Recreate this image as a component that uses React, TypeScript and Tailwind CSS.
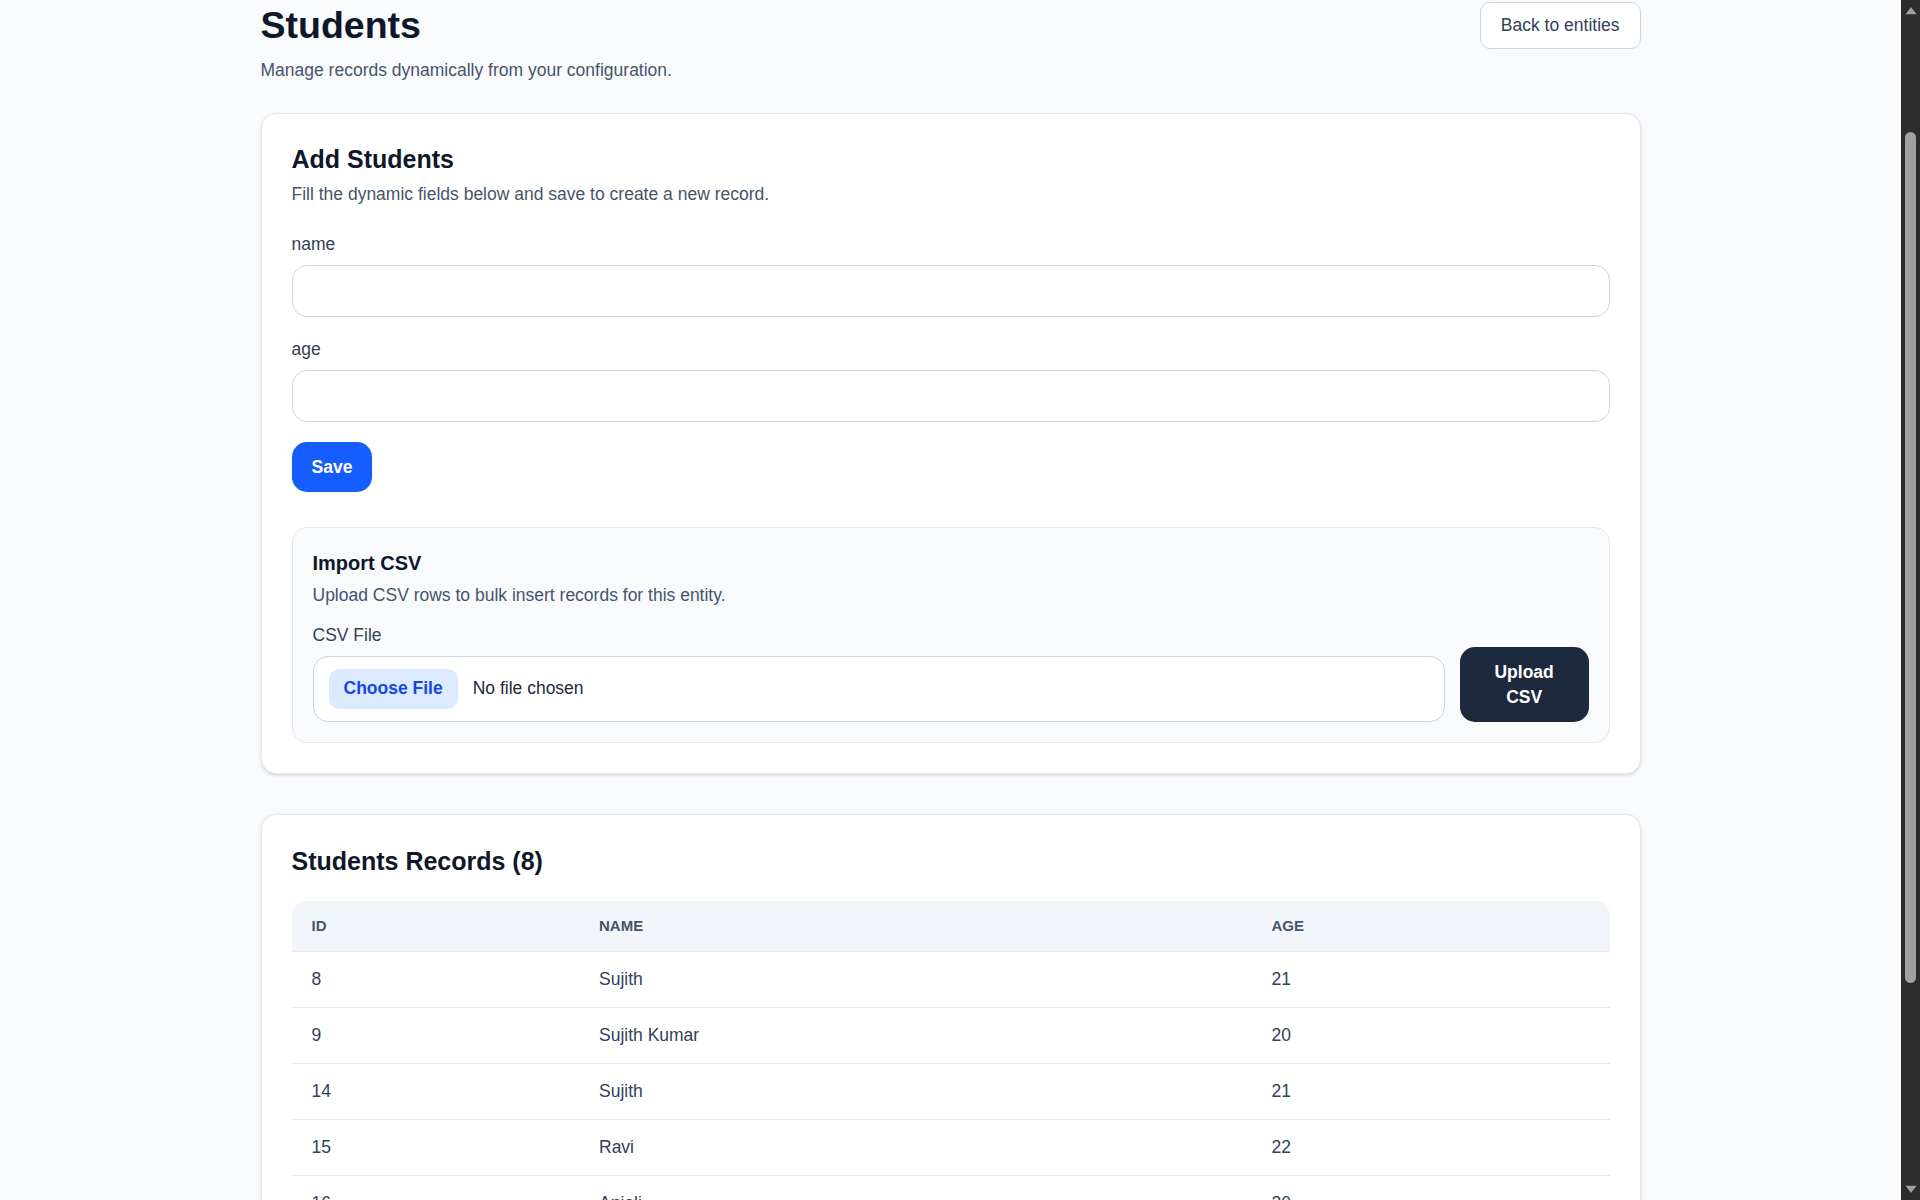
const records = [
  { id: 8, name: 'Sujith', age: 21 },
  { id: 9, name: 'Sujith Kumar', age: 20 },
  { id: 14, name: 'Sujith', age: 21 },
  { id: 15, name: 'Ravi', age: 22 },
  { id: 16, name: 'Anjali', age: 20 },
  { id: 17, name: 'Priya', age: 19 },
  { id: 18, name: 'Arun', age: 23 },
  { id: 19, name: 'Meena', age: 21 }
]

const fields = ['name', 'age']

function Field({ label }: { label: string }): React.JSX.Element {
  return (
    <div>
      <label className="block text-sm text-slate-700">{label}</label>
      <input
        type="text"
        className="mt-1.5 block h-[42px] w-full rounded-xl border border-slate-300 bg-white px-3 text-sm text-slate-900 outline-none"
      />
    </div>
  )
}

function ImportCsv(): React.JSX.Element {
  return (
    <div className="mt-7 rounded-xl border border-slate-200 bg-slate-50 p-4">
      <h3 className="text-base font-bold text-slate-900">Import CSV</h3>
      <p className="mt-1 text-sm text-slate-600">
        Upload CSV rows to bulk insert records for this entity.
      </p>
      <div className="mt-3 flex items-end gap-3">
        <div className="flex-1">
          <label className="block text-sm text-slate-700">CSV File</label>
          <div className="mt-1.5 flex h-[53px] items-center rounded-xl border border-slate-300 bg-white px-3">
            <span className="rounded-lg bg-blue-100 px-3 py-1.5 text-sm font-bold text-blue-700">
              Choose File
            </span>
            <span className="ml-3 text-sm text-slate-800">No file chosen</span>
          </div>
        </div>
        <button className="w-[103px] shrink-0 rounded-xl bg-slate-800 px-4 py-2.5 text-center text-sm font-bold text-white">
          Upload CSV
        </button>
      </div>
    </div>
  )
}

// dark browser scrollbar as it appears in the capture
function Scrollbar(): React.JSX.Element {
  return (
    <div className="flex w-[15.2px] shrink-0 flex-col items-center bg-[#2c2c2c]">
      <svg className="mt-[4.8px] h-[7.2px] w-[9.6px]" viewBox="0 0 10 7">
        <path d="M5 0.6 L9.6 6.6 L0.4 6.6 Z" fill="#9f9f9f" strokeLinejoin="round" />
      </svg>
      <div className="mt-[93.6px] h-[681px] w-[8.6px] rounded-full bg-[#a0a0a0]" />
      <div className="flex-1" />
      <svg className="mb-[4.6px] h-[7.2px] w-[9.6px]" viewBox="0 0 10 7">
        <path d="M0.4 0.4 L9.6 0.4 L5 6.4 Z" fill="#9f9f9f" strokeLinejoin="round" />
      </svg>
    </div>
  )
}

export default function App(): React.JSX.Element {
  return (
    <div className="flex h-[960px] bg-slate-50 font-['Liberation_Sans',Arial,sans-serif] text-slate-900 [zoom:1.25]">
      <main className="min-w-0 flex-1 overflow-hidden">
        <div className="mx-auto max-w-6xl px-6 pb-10">
          <header className="flex items-start justify-between">
            <div>
              <h1 className="mt-0.5 text-3xl font-bold text-slate-900">Students</h1>
              <p className="mt-2 text-sm text-slate-600">
                Manage records dynamically from your configuration.
              </p>
            </div>
            <button className="mt-[1.5px] rounded-lg border border-slate-300 bg-white px-4 py-2 text-sm text-slate-700">
              Back to entities
            </button>
          </header>

          <section className="mt-6 rounded-xl border border-slate-200 bg-white p-6 shadow-sm">
            <h2 className="text-xl leading-tight font-bold text-slate-900">Add Students</h2>
            <p className="mt-1.5 text-sm text-slate-600">
              Fill the dynamic fields below and save to create a new record.
            </p>
            <form className="mt-5 space-y-4">
              {fields.map((f) => (
                <Field key={f} label={f} />
              ))}
              <button
                type="button"
                className="rounded-xl bg-blue-600 px-4 py-2.5 text-sm font-bold text-white"
              >
                Save
              </button>
            </form>
            <ImportCsv />
          </section>

          <section className="mt-8 rounded-xl border border-slate-200 bg-white p-6 shadow-sm">
            <h2 className="mt-px text-xl leading-tight font-bold text-slate-900">
              Students Records ({records.length})
            </h2>
            <div className="mt-[19px] overflow-hidden rounded-xl">
              <table className="w-full table-fixed text-left text-sm">
                <colgroup>
                  <col className="w-[230px]" />
                  <col className="w-[538px]" />
                  <col />
                </colgroup>
                <thead className="bg-slate-100">
                  <tr className="border-b border-slate-200">
                    <th className="px-4 py-3 text-xs font-bold uppercase text-slate-600">ID</th>
                    <th className="px-4 py-3 text-xs font-bold uppercase text-slate-600">Name</th>
                    <th className="px-4 py-3 text-xs font-bold uppercase text-slate-600">Age</th>
                  </tr>
                </thead>
                <tbody>
                  {records.map((r) => (
                    <tr key={r.id} className="border-b border-slate-200 last:border-b-0">
                      <td className="px-4 py-3 text-slate-700">{r.id}</td>
                      <td className="px-4 py-3 text-slate-700">{r.name}</td>
                      <td className="px-4 py-3 text-slate-700">{r.age}</td>
                    </tr>
                  ))}
                </tbody>
              </table>
            </div>
          </section>
        </div>
      </main>
      <Scrollbar />
    </div>
  )
}
